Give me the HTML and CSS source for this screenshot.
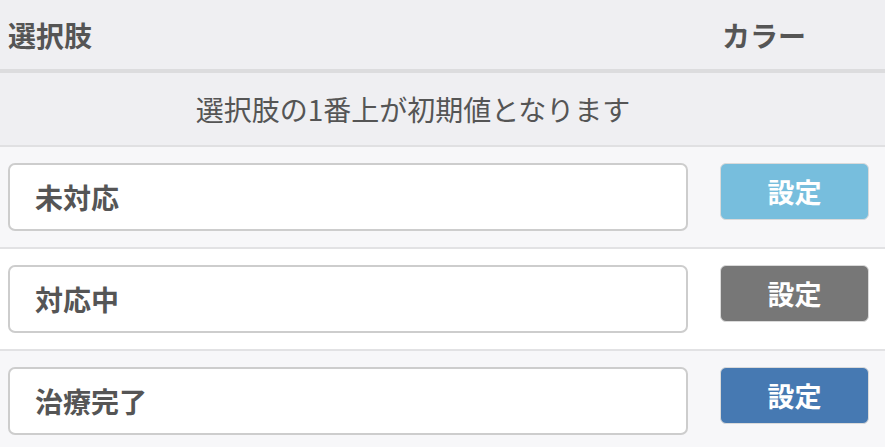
FILE: index.html
```html
<!DOCTYPE html>
<html lang="ja">
<head>
  <meta charset="utf-8">
  <title>選択肢の設定</title>
  <link rel="stylesheet" href="styles.css">
</head>
<body>
  <div class="options">
    <div class="options-head">
      <div class="col-main">選択肢</div>
      <div class="col-color">カラー</div>
    </div>

    <div class="options-note">選択肢の1番上が初期値となります</div>

    <div class="option-row">
      <input class="option-name" type="text" value="未対応">
      <button class="color-btn color-light">設定</button>
    </div>
    <div class="option-row even">
      <input class="option-name" type="text" value="対応中">
      <button class="color-btn color-gray">設定</button>
    </div>
    <div class="option-row">
      <input class="option-name" type="text" value="治療完了">
      <button class="color-btn color-blue">設定</button>
    </div>
  </div>
</body>
</html>
```

FILE: styles.css
```css
body {
  margin: 0;
  font-family: "Noto Sans CJK JP", "Noto Sans", sans-serif;
  color: #555;
  background-color: #f7f7f9;
}

.options {
  width: 885px;
}

.options-head {
  display: flex;
  align-items: center;
  height: 69px;
  padding-left: 8px;
  padding-right: 16px;
  gap: 32px;
  background-color: #efeff2;
  border-bottom: 4px solid #dcdcde;
  font-size: 28px;
  font-weight: bold;
}

.col-main {
  flex: 1;
}

.col-color {
  width: 147px;
  padding-left: 2px;
}

.options-note {
  height: 72px;
  line-height: 72px;
  padding-right: 59px;
  text-align: center;
  font-size: 28px;
  background-color: #efeff2;
  border-bottom: 2px solid #e0e0e2;
}

.option-row {
  display: flex;
  align-items: flex-start;
  gap: 32px;
  height: 102px;
  box-sizing: border-box;
  padding: 16px 16px 16px 8px;
  background-color: #f7f7f9;
  border-bottom: 2px solid #e2e2e4;
}

.option-row.even {
  background-color: #fff;
}

.option-name {
  flex: 1;
  height: 68px;
  box-sizing: border-box;
  margin: 0;
  padding: 0 0 0 25px;
  border: 2px solid #cdcdcd;
  border-radius: 7px;
  background-color: #fff;
  font-family: inherit;
  font-size: 28px;
  font-weight: bold;
  color: #555;
  outline: none;
}

.color-btn {
  width: 149px;
  height: 57px;
  margin: 0;
  padding: 0;
  border: 1px solid #dadada;
  border-radius: 6px;
  font-family: inherit;
  font-size: 27px;
  font-weight: bold;
  color: #fff;
  cursor: pointer;
}

.color-light {
  background-color: #77bedd;
}

.color-gray {
  background-color: #777;
}

.color-blue {
  background-color: #4679b2;
}
```
